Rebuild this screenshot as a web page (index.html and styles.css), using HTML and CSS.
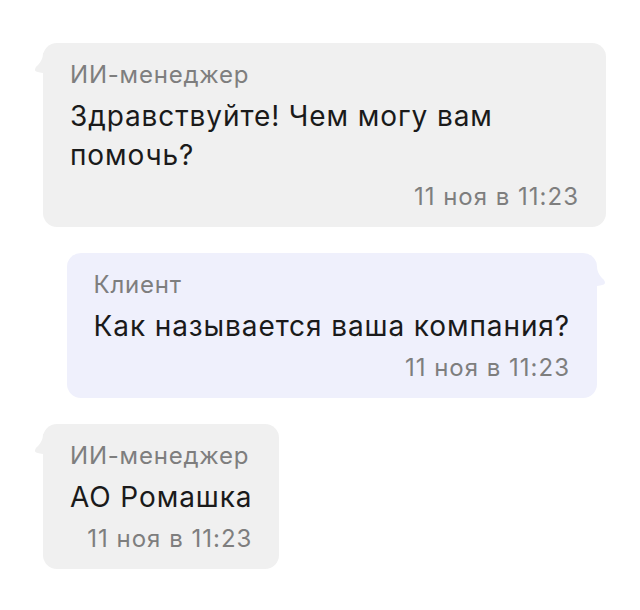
FILE: index.html
```html
<!DOCTYPE html>
<html lang="ru">
<head>
<meta charset="utf-8">
<link rel="stylesheet" href="styles.css">
</head>
<body>
<div class="chat">
  <div class="msg msg-in">
    <div class="author">ИИ-менеджер</div>
    <div class="text">Здравствуйте! Чем могу вам помочь?</div>
    <div class="time">11 ноя в 11:23</div>
  </div>
  <div class="msg msg-out">
    <div class="author">Клиент</div>
    <div class="text">Как называется ваша компания?</div>
    <div class="time">11 ноя в 11:23</div>
  </div>
  <div class="msg msg-in">
    <div class="author">ИИ-менеджер</div>
    <div class="text">АО Ромашка</div>
    <div class="time">11 ноя в 11:23</div>
  </div>
</div>
</body>
</html>
```
FILE: styles.css
```css
html, body {
  margin: 0;
  padding: 0;
  background: #ffffff;
}
body {
  font-family: Inter, "Noto Sans", sans-serif;
}
.chat {
  display: flex;
  flex-direction: column;
  gap: 26px;
  padding: 43px 34px 0 43px;
  width: 563px;
}
.msg {
  position: relative;
  max-width: 509px;
  padding: 18px 27px 16px 27px;
  border-radius: 14px;
}
.msg-in {
  align-self: flex-start;
  background: #f0f0f0;
}
.msg-out {
  align-self: flex-end;
  background: #eff0fc;
  margin-right: 9px;
}
.msg::before {
  content: "";
  position: absolute;
  top: 10px;
  width: 12px;
  height: 20px;
  background: inherit;
  clip-path: path("M12 0 L9 0 C9 6 6 10 3.5 12.5 C0 15.5 0.5 18.3 3 18.8 C5 19.3 7 19.6 9 20 L12 20 Z");
}
.msg-in::before {
  left: -9px;
}
.msg-out::before {
  right: -9px;
  top: 13px;
  transform: scaleX(-1);
}
.author {
  font-size: 24px;
  line-height: 28px;
  letter-spacing: 0.8px;
  color: #7e7e7e;
  margin-bottom: 8px;
}
.text {
  font-size: 28px;
  line-height: 39px;
  letter-spacing: 0.9px;
  color: #1a1a1a;
}
.time {
  font-size: 24px;
  line-height: 28px;
  letter-spacing: 1px;
  color: #7e7e7e;
  text-align: right;
  margin-top: 8px;
}
```
